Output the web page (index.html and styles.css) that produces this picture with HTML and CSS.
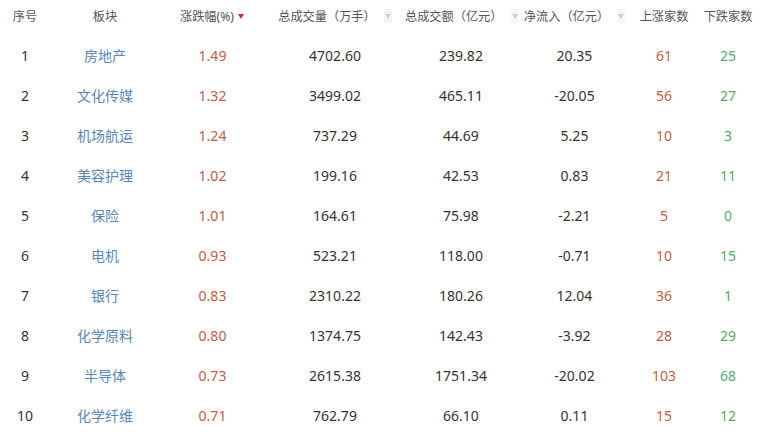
FILE: index.html
```html
<!DOCTYPE html>
<html lang="zh">
<head>
<meta charset="utf-8">
<link rel="stylesheet" href="styles.css">
</head>
<body>
<table class="board">
  <colgroup>
    <col class="c1"><col class="c2"><col class="c3"><col class="c4"><col class="c5"><col class="c6"><col class="c7"><col class="c8">
  </colgroup>
  <thead>
    <tr>
      <th>序号</th>
      <th>板块</th>
      <th>涨跌幅(%)<span class="sort active"></span></th>
      <th>总成交量（万手）<span class="sort"></span></th>
      <th>总成交额（亿元）<span class="sort"></span></th>
      <th>净流入（亿元）<span class="sort"></span></th>
      <th>上涨家数</th>
      <th>下跌家数</th>
    </tr>
  </thead>
  <tbody>
    <tr><td>1</td><td class="name">房地产</td><td class="up">1.49</td><td>4702.60</td><td>239.82</td><td>20.35</td><td class="up">61</td><td class="down">25</td></tr>
    <tr><td>2</td><td class="name">文化传媒</td><td class="up">1.32</td><td>3499.02</td><td>465.11</td><td>-20.05</td><td class="up">56</td><td class="down">27</td></tr>
    <tr><td>3</td><td class="name">机场航运</td><td class="up">1.24</td><td>737.29</td><td>44.69</td><td>5.25</td><td class="up">10</td><td class="down">3</td></tr>
    <tr><td>4</td><td class="name">美容护理</td><td class="up">1.02</td><td>199.16</td><td>42.53</td><td>0.83</td><td class="up">21</td><td class="down">11</td></tr>
    <tr><td>5</td><td class="name">保险</td><td class="up">1.01</td><td>164.61</td><td>75.98</td><td>-2.21</td><td class="up">5</td><td class="down">0</td></tr>
    <tr><td>6</td><td class="name">电机</td><td class="up">0.93</td><td>523.21</td><td>118.00</td><td>-0.71</td><td class="up">10</td><td class="down">15</td></tr>
    <tr><td>7</td><td class="name">银行</td><td class="up">0.83</td><td>2310.22</td><td>180.26</td><td>12.04</td><td class="up">36</td><td class="down">1</td></tr>
    <tr><td>8</td><td class="name">化学原料</td><td class="up">0.80</td><td>1374.75</td><td>142.43</td><td>-3.92</td><td class="up">28</td><td class="down">29</td></tr>
    <tr><td>9</td><td class="name">半导体</td><td class="up">0.73</td><td>2615.38</td><td>1751.34</td><td>-20.02</td><td class="up">103</td><td class="down">68</td></tr>
    <tr><td>10</td><td class="name">化学纤维</td><td class="up">0.71</td><td>762.79</td><td>66.10</td><td>0.11</td><td class="up">15</td><td class="down">12</td></tr>
  </tbody>
</table>
</body>
</html>
```
FILE: styles.css
```css
html, body {
  margin: 0;
  padding: 0;
  background: #ffffff;
}
body {
  font-family: "Noto Sans", "Noto Sans CJK SC", sans-serif;
  color: #333333;
}
.board {
  border-collapse: collapse;
  table-layout: fixed;
  width: 760px;
}
.c1 { width: 50px; }
.c2 { width: 110px; }
.c3 { width: 105px; }
.c4 { width: 140px; }
.c5 { width: 112px; }
.c6 { width: 115px; }
.c7 { width: 64px; }
.c8 { width: 64px; }
.board th {
  height: 32px;
  padding: 0;
  font-weight: normal;
  font-size: 12.2px;
  color: #555555;
  text-align: center;
  white-space: nowrap;
  vertical-align: middle;
}
.board td {
  height: 40px;
  padding: 0;
  font-size: 14px;
  text-align: center;
  vertical-align: middle;
  white-space: nowrap;
}
.board tbody tr:first-child td { padding-top: 3px; }
.name { color: #5a86b8; }
.up { color: #c65c45; }
.down { color: #58a870; }
.sort {
  display: inline-block;
  width: 8px;
  height: 14px;
  margin-left: 8px;
  vertical-align: -2px;
  background: #f4f4f4;
  position: relative;
}
.sort::after {
  content: "";
  position: absolute;
  left: 1px;
  top: 5px;
  border-left: 3px solid transparent;
  border-right: 3px solid transparent;
  border-top: 5px solid #cfcfcf;
}
.sort.active { background: transparent; margin-left: 3px; }
.sort.active::after { border-top-color: #d42a2a; border-left-width: 3.5px; border-right-width: 3.5px; }
```
